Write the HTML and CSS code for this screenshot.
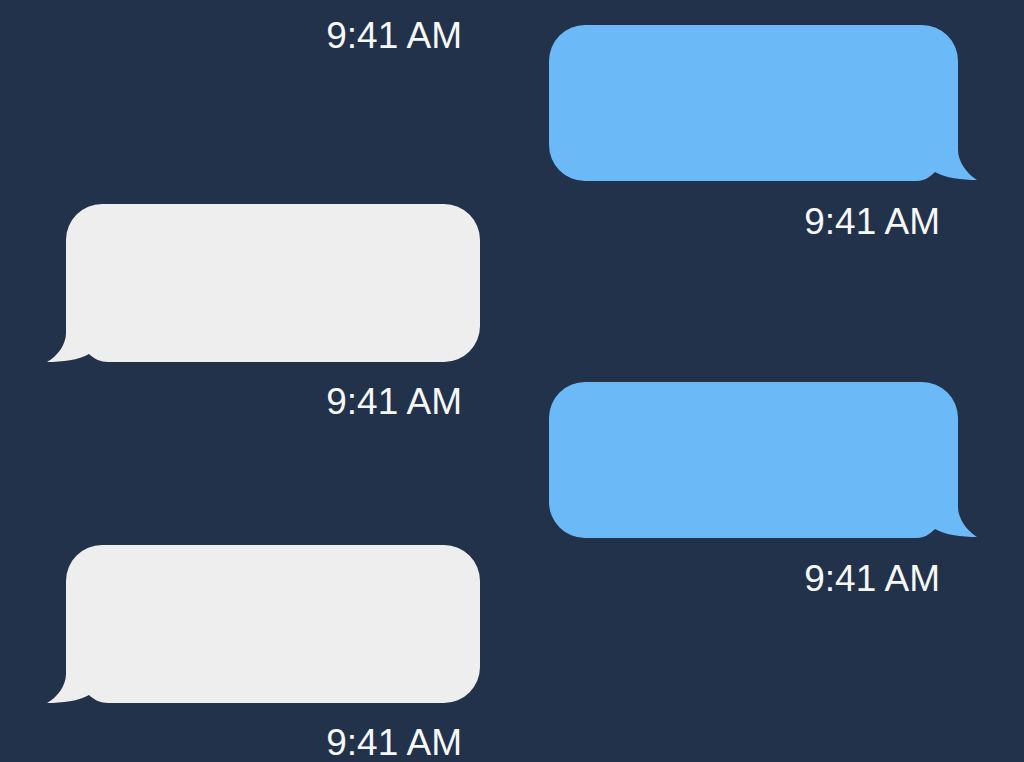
FILE: index.html
```html
<!DOCTYPE html>
<html lang="en">
<head>
<meta charset="utf-8">
<title>Messages</title>
<link rel="stylesheet" href="styles.css">
</head>
<body>
<main class="thread">
  <section class="column column-in">
    <p class="time">9:41 AM</p>
    <div class="group group-first-in">
      <svg class="bubble bubble-in" width="435" height="158" viewBox="0 0 435 158" aria-hidden="true">
        <path d="M56 0 H398 A36 36 0 0 1 434 36 V122 A36 36 0 0 1 398 158 H62 C55 158 48 155 43 150 C33 156 16 158 1 158 C12 152 20 140 20 129 V36 A36 36 0 0 1 56 0 Z"/>
      </svg>
      <p class="time">9:41 AM</p>
    </div>
    <div class="group group-next-in">
      <svg class="bubble bubble-in" width="435" height="158" viewBox="0 0 435 158" aria-hidden="true">
        <path d="M56 0 H398 A36 36 0 0 1 434 36 V122 A36 36 0 0 1 398 158 H62 C55 158 48 155 43 150 C33 156 16 158 1 158 C12 152 20 140 20 129 V36 A36 36 0 0 1 56 0 Z"/>
      </svg>
      <p class="time">9:41 AM</p>
    </div>
  </section>
  <section class="column column-out">
    <div class="group">
      <svg class="bubble bubble-out" width="429" height="157" viewBox="0 0 429 157" aria-hidden="true">
        <path d="M36 0 H373 A36 36 0 0 1 409 36 V125 C409 136 417 148 428 155 C413 155 396 153 386 147 C381 152 375 156 368 156 H36 A36 36 0 0 1 0 120 V36 A36 36 0 0 1 36 0 Z"/>
      </svg>
      <p class="time">9:41 AM</p>
    </div>
    <div class="group group-next-out">
      <svg class="bubble bubble-out" width="429" height="157" viewBox="0 0 429 157" aria-hidden="true">
        <path d="M36 0 H373 A36 36 0 0 1 409 36 V125 C409 136 417 148 428 155 C413 155 396 153 386 147 C381 152 375 156 368 156 H36 A36 36 0 0 1 0 120 V36 A36 36 0 0 1 36 0 Z"/>
      </svg>
      <p class="time">9:41 AM</p>
    </div>
  </section>
</main>
</body>
</html>
```
FILE: styles.css
```css
html, body {
  margin: 0;
  padding: 0;
  height: 762px;
  overflow: hidden;
  background: #21324a;
}

.thread {
  display: flex;
  align-items: flex-start;
  gap: 68px;
  padding-left: 46px;
  font-family: "Liberation Sans", Arial, sans-serif;
}

.column {
  display: flex;
  flex-direction: column;
}

.column-in {
  width: 435px;
  padding-top: 18px;
}

.column-out {
  width: 429px;
  padding-top: 25px;
}

.group {
  display: flex;
  flex-direction: column;
  gap: 22px;
}

.group-first-in {
  margin-top: 150px;
}

.group-next-in {
  margin-top: 125px;
}

.group-next-out {
  margin-top: 142px;
}

.bubble {
  display: block;
}

.bubble-in path {
  fill: #eeeeef;
}

.bubble-out path {
  fill: #6cb9f7;
}

.time {
  margin: 0;
  font-size: 37px;
  line-height: 36px;
  color: #f7f8fa;
  text-align: right;
}

.column-in .time {
  padding-right: 19px;
}

.column-out .time {
  padding-right: 38px;
}
```
